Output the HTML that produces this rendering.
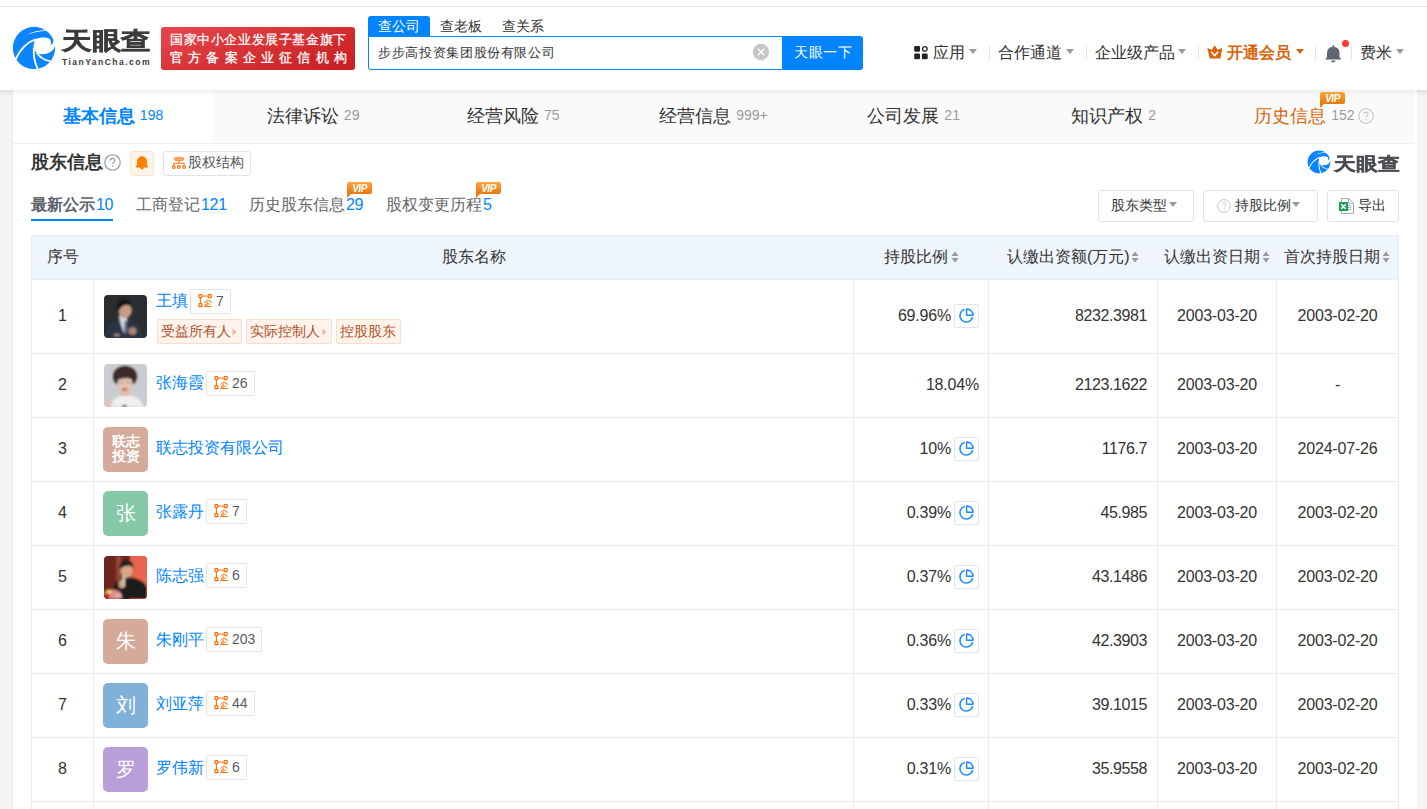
<!DOCTYPE html>
<html><head><meta charset="utf-8"><style>
*{box-sizing:border-box;margin:0;padding:0}
html,body{width:1427px;height:809px;overflow:hidden;background:#f5f5f5;font-family:"Liberation Sans",sans-serif;color:#333}
.t{position:absolute;white-space:nowrap}
.a{position:absolute}
.caret{position:absolute;width:0;height:0;border-left:4.5px solid transparent;border-right:4.5px solid transparent;border-top:5px solid #999}
.sep{position:absolute;width:1px;height:14px;background:#e3e3e3;top:46px}
.vip{position:absolute;width:25px;height:12px;background:linear-gradient(180deg,#f9a53c,#ea760f);border-radius:2px 2px 2px 0}
.vip:after{content:"";position:absolute;left:0;bottom:-4px;border-left:4px solid #ea760f;border-bottom:4px solid transparent}
.vip svg{position:absolute;left:0;top:0}
.btn{position:absolute;border:1px solid #dfe2e8;border-radius:3px;background:#fff}
.bd{position:absolute;height:25px;border:1px solid #e1e5eb;border-radius:2px;background:#fff}
.tg{position:absolute;height:25px;border:1px solid #fbdccb;background:#fff3ec;border-radius:2px}
.pie{position:absolute;width:25px;height:24px;border:1px solid #dfe4ec;border-radius:2px;background:#fff}
.hl{position:absolute;height:1px;background:#e4edf6}
.vl{position:absolute;width:1px;background:#e4edf6}
</style></head><body>
<div class="a" style="left:0;top:0;width:1427px;height:90px;background:#fff;box-shadow:0 2px 5px rgba(0,0,0,0.06)"></div>
<div class="a" style="left:0;top:6px;width:1427px;height:1px;background:#e6e6e6"></div>
<svg class="a" style="left:10px;top:24px" width="50" height="50" viewBox="0 0 809 809">
<circle cx="388" cy="388" r="342" fill="#0a84ff"/>
<path d="M268,172 C370,125 470,100 585,96 L590,110 C480,118 380,140 268,172 Z" fill="#fff"/>
<path d="M88,575 C160,420 280,290 425,245" fill="none" stroke="#fff" stroke-width="30"/>
<path d="M410,250 C480,215 580,208 640,243 C672,268 672,312 652,338 C685,332 705,300 705,255 L790,240 L790,372 L724,366 C702,442 622,490 522,490 C472,489 442,478 430,466 C400,440 384,410 382,380 C380,322 394,282 410,250 Z" fill="#fff"/>
<path d="M386,385 C376,500 398,620 452,740" fill="none" stroke="#fff" stroke-width="30"/>
<path d="M432,468 C488,540 560,586 650,602" fill="none" stroke="#fff" stroke-width="28"/>
</svg>
<div class="t" style="left:62px;top:23px;font-size:24px;line-height:36px;color:#3b3b3b;font-weight:bold;-webkit-text-stroke:0.5px #3b3b3b;transform:scaleX(1.23);transform-origin:0 0">天眼查</div>
<div class="t" style="left:62px;top:55px;font-size:8.6px;line-height:14px;color:#3b3b3b;font-weight:bold;letter-spacing:1.42px">TianYanCha.com</div>
<div class="a" style="left:161px;top:27px;width:194px;height:43px;border-radius:3px;background:linear-gradient(160deg,#e6474b,#c71d20)"></div>
<div class="t" style="left:170px;top:30px;font-size:13px;line-height:20px;color:#fff;letter-spacing:0.6px;-webkit-text-stroke:0.25px #fff">国家中小企业发展子基金旗下</div>
<div class="t" style="left:170px;top:48px;font-size:13px;line-height:20px;color:#fff;letter-spacing:5.2px;-webkit-text-stroke:0.3px #fff">官方备案企业征信机构</div>
<div class="a" style="left:368px;top:16px;width:62px;height:21px;background:#0084ff;border-radius:3px 3px 0 0"></div>
<div class="t" style="left:378px;top:17px;font-size:13.6px;line-height:20px;color:#fff;">查公司</div>
<div class="t" style="left:440px;top:17px;font-size:13.6px;line-height:20px;color:#333;">查老板</div>
<div class="t" style="left:502px;top:17px;font-size:13.6px;line-height:20px;color:#333;">查关系</div>
<div class="a" style="left:368px;top:36px;width:416px;height:34px;border:1px solid #0084ff;border-radius:0 0 0 3px;background:#fff"></div>
<div class="t" style="left:378px;top:43px;font-size:13px;line-height:20px;color:#333;letter-spacing:0.65px">步步高投资集团股份有限公司</div>
<svg class="a" style="left:752px;top:43px" width="18" height="18" viewBox="0 0 18 18"><circle cx="9" cy="9" r="8.2" fill="#c6c6c6"/><path d="M5.8,5.8 L12.2,12.2 M12.2,5.8 L5.8,12.2" stroke="#fff" stroke-width="1.3"/></svg>
<div class="a" style="left:782px;top:36px;width:81px;height:34px;background:#0084ff;border-radius:0 3px 3px 0"></div>
<div class="t" style="left:794px;top:42px;font-size:14px;line-height:20px;color:#fff;letter-spacing:0.7px">天眼一下</div>
<svg class="a" style="left:913px;top:45px" width="16" height="16" viewBox="0 0 16 16" fill="#1f2329"><rect x="1.2" y="1" width="5.8" height="5.8" rx="1.3"/><circle cx="11.8" cy="3.9" r="2.3" fill="none" stroke="#1f2329" stroke-width="1.3"/><rect x="1.2" y="8.4" width="5.8" height="5.8" rx="1.3"/><rect x="8.9" y="8.4" width="5.8" height="5.8" rx="1.3"/></svg>
<div class="t" style="left:933px;top:41px;font-size:16px;line-height:24px;color:#333;">应用</div>
<div class="caret" style="left:969px;top:49px"></div>
<div class="sep" style="left:989px"></div>
<div class="t" style="left:998px;top:41px;font-size:16px;line-height:24px;color:#333;">合作通道</div>
<div class="caret" style="left:1066px;top:49px"></div>
<div class="sep" style="left:1086px"></div>
<div class="t" style="left:1095px;top:41px;font-size:16px;line-height:24px;color:#333;">企业级产品</div>
<div class="caret" style="left:1178px;top:49px"></div>
<div class="sep" style="left:1198px"></div>
<svg class="a" style="left:1206px;top:44px" width="18" height="16" viewBox="0 0 18 16"><path d="M1.3,3.9 L5.9,5.8 L8.7,1.2 L11.6,5.8 L16.3,3.9 L14.4,14.6 L3.7,14.6 Z" fill="#d9650a"/><path d="M5.3,7.7 L8.7,11.5 L12.2,7.7" fill="none" stroke="#fff" stroke-width="1.6"/></svg>
<div class="t" style="left:1227px;top:41px;font-size:16px;line-height:24px;color:#d9650a;font-weight:bold">开通会员</div>
<div class="caret" style="left:1296px;top:49px;border-top-color:#d9650a"></div>
<div class="sep" style="left:1315px"></div>
<svg class="a" style="left:1324px;top:44px" width="20" height="20" viewBox="0 0 20 20" fill="#5f6670"><rect x="8.6" y="1" width="1.3" height="2.5"/><path d="M3,14.2 L3,9 C3,5 5.7,2.7 9.25,2.7 C12.8,2.7 15.5,5 15.5,9 L15.5,14.2 Z"/><rect x="1.6" y="13.8" width="15.2" height="1.6" rx="0.6"/><rect x="7.4" y="16.6" width="3.8" height="1.6" rx="0.6"/></svg>
<div class="a" style="left:1342px;top:40px;width:7px;height:7px;border-radius:50%;background:#ff3b30"></div>
<div class="sep" style="left:1351px"></div>
<div class="t" style="left:1360px;top:41px;font-size:16px;line-height:24px;color:#333;">费米</div>
<div class="caret" style="left:1396px;top:49px"></div>
<div class="a" style="left:13px;top:90px;width:1404px;height:719px;background:#fff"></div>
<div class="a" style="left:12px;top:90px;width:1px;height:719px;background:#ebebeb"></div>
<div class="a" style="left:13px;top:90px;width:1401px;height:54px;background:#fafafa;border-bottom:1px solid #eeeeee"></div>
<div class="a" style="left:13px;top:90px;width:200px;height:53px;background:#fff"></div>
<div class="a" style="left:0;top:90px;width:1427px;height:6px;background:linear-gradient(rgba(0,0,0,0.055),rgba(0,0,0,0))"></div>
<div class="t" style="left:13.0px;top:90px;width:200.1px;text-align:center;font-size:18px;line-height:53px;color:#0084ff;font-weight:bold">基本信息<span style="font-size:14px;font-weight:normal;margin-left:5px;position:relative;top:-2px">198</span></div>
<div class="t" style="left:213.1px;top:90px;width:200.1px;text-align:center;font-size:18px;line-height:53px;color:#333">法律诉讼<span style="font-size:14px;color:#999;margin-left:5px;position:relative;top:-2px">29</span></div>
<div class="t" style="left:413.3px;top:90px;width:200.1px;text-align:center;font-size:18px;line-height:53px;color:#333">经营风险<span style="font-size:14px;color:#999;margin-left:5px;position:relative;top:-2px">75</span></div>
<div class="t" style="left:613.4px;top:90px;width:200.1px;text-align:center;font-size:18px;line-height:53px;color:#333">经营信息<span style="font-size:14px;color:#999;margin-left:5px;position:relative;top:-2px">999+</span></div>
<div class="t" style="left:813.6px;top:90px;width:200.1px;text-align:center;font-size:18px;line-height:53px;color:#333">公司发展<span style="font-size:14px;color:#999;margin-left:5px;position:relative;top:-2px">21</span></div>
<div class="t" style="left:1013.7px;top:90px;width:200.1px;text-align:center;font-size:18px;line-height:53px;color:#333">知识产权<span style="font-size:14px;color:#999;margin-left:5px;position:relative;top:-2px">2</span></div>
<div class="t" style="left:1213.9px;top:90px;width:200.1px;text-align:center;font-size:18px;line-height:53px;color:#d9650a">历史信息<span style="font-size:14px;color:#999;margin-left:5px;position:relative;top:-2px">152</span><span style="display:inline-block;width:19px"></span></div>
<svg class="a" style="left:1358px;top:108px" width="16" height="16" viewBox="0 0 16 16"><circle cx="8" cy="8" r="7.3" fill="none" stroke="#c0c4cc" stroke-width="1.1"/><path d="M5.9,6.2 C5.9,4.9 6.8,4.1 8,4.1 C9.2,4.1 10.1,4.9 10.1,6 C10.1,7.3 8.2,7.5 8.2,9.3" fill="none" stroke="#c0c4cc" stroke-width="1.1"/><circle cx="8.2" cy="11.4" r="0.75" fill="#c0c4cc"/></svg>
<div class="vip" style="left:1320px;top:92px"><svg width="25" height="12" viewBox="0 0 25 12"><text x="12.5" y="10" text-anchor="middle" font-family="Liberation Sans" font-size="10" font-weight="bold" font-style="italic" fill="#fff" letter-spacing="-0.5">VIP</text></svg></div>
<div class="t" style="left:31px;top:149px;font-size:18px;line-height:26px;color:#333;font-weight:bold">股东信息</div>
<svg class="a" style="left:104px;top:154px" width="17" height="17" viewBox="0 0 16 16"><circle cx="8" cy="8" r="7.3" fill="none" stroke="#999" stroke-width="1.1"/><path d="M5.9,6.2 C5.9,4.9 6.8,4.1 8,4.1 C9.2,4.1 10.1,4.9 10.1,6 C10.1,7.3 8.2,7.5 8.2,9.3" fill="none" stroke="#999" stroke-width="1.1"/><circle cx="8.2" cy="11.4" r="0.75" fill="#999"/></svg>
<div class="a" style="left:130px;top:151px;width:24px;height:25px;background:#fff4ea;border:1px solid #ffe4cf;border-radius:3px"></div>
<svg class="a" style="left:135px;top:155px" width="14" height="15" viewBox="0 0 14 15" fill="#ff7f00"><path d="M2,11.5 L2,6.8 C2,3.4 4.2,1.2 7,1.2 C9.8,1.2 12,3.4 12,6.8 L12,11.5 Z"/><rect x="0.8" y="10.6" width="12.4" height="1.9" rx="0.9"/><circle cx="7" cy="12.7" r="1.7"/></svg>
<div class="btn" style="left:163px;top:151px;width:88px;height:25px;border-color:#dfe3ea"></div>
<svg class="a" style="left:171px;top:156px" width="16" height="14" viewBox="0 0 16 14"><rect x="3.3" y="1.4" width="9.4" height="3.2" rx="1.5" fill="#ffa466" stroke="#ff6a00" stroke-width="0.6"/><path d="M8,4.6 V7.2 M2.8,9.6 V7.2 H13.1 V9.6" fill="none" stroke="#ff6a00" stroke-width="1"/><rect x="1.6" y="9.9" width="2.4" height="2.4" rx="0.5" fill="none" stroke="#ff6a00" stroke-width="1.1"/><rect x="6.7" y="9.9" width="2.4" height="2.4" rx="0.5" fill="none" stroke="#ff6a00" stroke-width="1.1"/><rect x="11.9" y="9.9" width="2.4" height="2.4" rx="0.5" fill="none" stroke="#ff6a00" stroke-width="1.1"/></svg>
<div class="t" style="left:188px;top:152px;font-size:13.8px;line-height:22px;color:#555;">股权结构</div>
<svg class="a" style="left:1306px;top:149px" width="27" height="27" viewBox="0 0 809 809">
<circle cx="388" cy="388" r="342" fill="#0a84ff"/>
<path d="M268,172 C370,125 470,100 585,96 L590,110 C480,118 380,140 268,172 Z" fill="#fff"/>
<path d="M88,575 C160,420 280,290 425,245" fill="none" stroke="#fff" stroke-width="30"/>
<path d="M410,250 C480,215 580,208 640,243 C672,268 672,312 652,338 C685,332 705,300 705,255 L790,240 L790,372 L724,366 C702,442 622,490 522,490 C472,489 442,478 430,466 C400,440 384,410 382,380 C380,322 394,282 410,250 Z" fill="#fff"/>
<path d="M386,385 C376,500 398,620 452,740" fill="none" stroke="#fff" stroke-width="30"/>
<path d="M432,468 C488,540 560,586 650,602" fill="none" stroke="#fff" stroke-width="28"/>
</svg>
<div class="t" style="left:1334px;top:150px;font-size:18px;line-height:28px;color:#4a4d52;font-weight:bold;-webkit-text-stroke:0.3px #4a4d52;transform:scaleX(1.22);transform-origin:0 0">天眼查</div>
<div class="t" style="left:31px;top:192px;font-size:16px;line-height:26px;color:#5a626c;font-weight:bold">最新公示<span style="color:#0084ff;font-weight:normal;margin-left:1px;font-size:16px;letter-spacing:-0.3px">10</span></div>
<div class="a" style="left:31px;top:219px;width:82px;height:2px;background:#0084ff"></div>
<div class="t" style="left:136px;top:192px;font-size:16px;line-height:26px;color:#666;">工商登记<span style="color:#0084ff;margin-left:1px;font-size:16px;letter-spacing:-0.3px">121</span></div>
<div class="t" style="left:249px;top:192px;font-size:16px;line-height:26px;color:#666;">历史股东信息<span style="color:#0084ff;margin-left:1px;font-size:16px;letter-spacing:-0.3px">29</span></div>
<div class="vip" style="left:347px;top:182px"><svg width="25" height="12" viewBox="0 0 25 12"><text x="12.5" y="10" text-anchor="middle" font-family="Liberation Sans" font-size="10" font-weight="bold" font-style="italic" fill="#fff" letter-spacing="-0.5">VIP</text></svg></div>
<div class="t" style="left:386px;top:192px;font-size:16px;line-height:26px;color:#666;">股权变更历程<span style="color:#0084ff;margin-left:1px;font-size:16px;letter-spacing:-0.3px">5</span></div>
<div class="vip" style="left:476px;top:182px"><svg width="25" height="12" viewBox="0 0 25 12"><text x="12.5" y="10" text-anchor="middle" font-family="Liberation Sans" font-size="10" font-weight="bold" font-style="italic" fill="#fff" letter-spacing="-0.5">VIP</text></svg></div>
<div class="btn" style="left:1098px;top:190px;width:96px;height:32px"></div>
<div class="t" style="left:1111px;top:194px;font-size:13.8px;line-height:24px;color:#333;">股东类型</div>
<div class="caret" style="left:1169px;top:202px;border-left-width:4px;border-right-width:4px;border-top-width:5px"></div>
<div class="btn" style="left:1203px;top:190px;width:115px;height:32px"></div>
<svg class="a" style="left:1217px;top:199px" width="14" height="14" viewBox="0 0 16 16"><circle cx="8" cy="8" r="7.3" fill="none" stroke="#c0c4cc" stroke-width="1.1"/><path d="M5.9,6.2 C5.9,4.9 6.8,4.1 8,4.1 C9.2,4.1 10.1,4.9 10.1,6 C10.1,7.3 8.2,7.5 8.2,9.3" fill="none" stroke="#c0c4cc" stroke-width="1.1"/><circle cx="8.2" cy="11.4" r="0.75" fill="#c0c4cc"/></svg>
<div class="t" style="left:1235px;top:194px;font-size:13.8px;line-height:24px;color:#333;">持股比例</div>
<div class="caret" style="left:1292px;top:202px;border-left-width:4px;border-right-width:4px;border-top-width:5px"></div>
<div class="btn" style="left:1327px;top:190px;width:72px;height:32px"></div>
<svg class="a" style="left:1338px;top:197px" width="18" height="18" viewBox="0 0 18 18"><path d="M3.5,1.5 H10.5 L15.5,6.2 V16.5 H3.5 Z" fill="#fff" stroke="#9aa1ab" stroke-width="0.9"/><path d="M10.5,1.5 V6.2 H15.5" fill="none" stroke="#9aa1ab" stroke-width="0.9"/><path d="M10,8.6 H13.3 M10,10.6 H13.3 M10,12.6 H13.3" stroke="#9aa1ab" stroke-width="0.9"/><rect x="1" y="5" width="9" height="9" fill="#1aa155"/><path d="M3.3,7.2 L7.7,11.8 M7.7,7.2 L3.3,11.8" stroke="#fff" stroke-width="1.5"/></svg>
<div class="t" style="left:1358px;top:194px;font-size:13.8px;line-height:24px;color:#333;">导出</div>
<div class="a" style="left:31px;top:235px;width:1368px;height:44px;background:#eef5fc"></div>
<div class="hl" style="left:31px;top:235px;width:1368px"></div>
<div class="hl" style="left:31px;top:279px;width:1368px"></div>
<div class="hl" style="left:31px;top:353px;width:1368px"></div>
<div class="hl" style="left:31px;top:417px;width:1368px"></div>
<div class="hl" style="left:31px;top:481px;width:1368px"></div>
<div class="hl" style="left:31px;top:545px;width:1368px"></div>
<div class="hl" style="left:31px;top:609px;width:1368px"></div>
<div class="hl" style="left:31px;top:673px;width:1368px"></div>
<div class="hl" style="left:31px;top:737px;width:1368px"></div>
<div class="hl" style="left:31px;top:801px;width:1368px"></div>
<div class="vl" style="left:31px;top:235px;height:574px"></div>
<div class="vl" style="left:93px;top:279px;height:530px"></div>
<div class="vl" style="left:853px;top:279px;height:530px"></div>
<div class="vl" style="left:988px;top:279px;height:530px"></div>
<div class="vl" style="left:1157px;top:279px;height:530px"></div>
<div class="vl" style="left:1276px;top:279px;height:530px"></div>
<div class="vl" style="left:1398px;top:235px;height:574px"></div>
<div class="t" style="left:-37.5px;top:245px;width:200px;text-align:center;font-size:16px;line-height:24px;color:#333;">序号</div>
<div class="t" style="left:373.5px;top:245px;width:200px;text-align:center;font-size:16px;line-height:24px;color:#333;">股东名称</div>
<div class="t" style="left:884px;top:245px;font-size:16px;line-height:24px;color:#333;">持股比例</div>
<svg class="a" style="left:951px;top:250px" width="8" height="14" viewBox="0 0 8 14" fill="#999"><path d="M0.5,6 L4,1.5 L7.5,6 Z M0.5,8 L4,12.5 L7.5,8 Z"/></svg>
<div class="t" style="left:1007px;top:245px;font-size:16px;line-height:24px;color:#333;">认缴出资额(万元)</div>
<svg class="a" style="left:1131px;top:250px" width="8" height="14" viewBox="0 0 8 14" fill="#999"><path d="M0.5,6 L4,1.5 L7.5,6 Z M0.5,8 L4,12.5 L7.5,8 Z"/></svg>
<div class="t" style="left:1164px;top:245px;font-size:16px;line-height:24px;color:#333;">认缴出资日期</div>
<svg class="a" style="left:1262px;top:250px" width="8" height="14" viewBox="0 0 8 14" fill="#999"><path d="M0.5,6 L4,1.5 L7.5,6 Z M0.5,8 L4,12.5 L7.5,8 Z"/></svg>
<div class="t" style="left:1284px;top:245px;font-size:16px;line-height:24px;color:#333;">首次持股日期</div>
<svg class="a" style="left:1382px;top:250px" width="8" height="14" viewBox="0 0 8 14" fill="#999"><path d="M0.5,6 L4,1.5 L7.5,6 Z M0.5,8 L4,12.5 L7.5,8 Z"/></svg>
<div class="t" style="left:-37.5px;top:303.5px;width:200px;text-align:center;font-size:16px;line-height:24px;color:#333;">1</div>
<div class="t" style="left:751px;top:303.5px;width:200px;text-align:right;font-size:16px;line-height:24px;color:#333;letter-spacing:-0.2px">69.96%</div>
<div class="pie" style="left:954px;top:304.0px"><svg class="a" style="left:-1px;top:-1px" width="24" height="24" viewBox="0 0 24 24"><path d="M10.2,5.6 A6.4,6.4 0 1 0 18.4,13.7" fill="none" stroke="#1a8cff" stroke-width="1.5" stroke-linecap="round"/><path d="M12.6,11.3 V4.9 A6.4,6.4 0 0 1 19.0,11.3 Z" fill="none" stroke="#1a8cff" stroke-width="1.5" stroke-linejoin="round"/></svg></div>
<div class="t" style="left:947px;top:303.5px;width:200px;text-align:right;font-size:16px;line-height:24px;color:#333;letter-spacing:-0.4px">8232.3981</div>
<div class="t" style="left:1117.0px;top:303.5px;width:200px;text-align:center;font-size:16px;line-height:24px;color:#333;letter-spacing:-0.2px">2003-03-20</div>
<div class="t" style="left:1237.5px;top:303.5px;width:200px;text-align:center;font-size:16px;line-height:24px;color:#333;letter-spacing:-0.2px">2003-02-20</div>
<div class="t" style="left:-37.5px;top:372.5px;width:200px;text-align:center;font-size:16px;line-height:24px;color:#333;">2</div>
<div class="t" style="left:779px;top:372.5px;width:200px;text-align:right;font-size:16px;line-height:24px;color:#333;letter-spacing:-0.2px">18.04%</div>
<div class="t" style="left:947px;top:372.5px;width:200px;text-align:right;font-size:16px;line-height:24px;color:#333;letter-spacing:-0.4px">2123.1622</div>
<div class="t" style="left:1117.0px;top:372.5px;width:200px;text-align:center;font-size:16px;line-height:24px;color:#333;letter-spacing:-0.2px">2003-03-20</div>
<div class="t" style="left:1237.5px;top:372.5px;width:200px;text-align:center;font-size:16px;line-height:24px;color:#333;letter-spacing:-0.2px">-</div>
<div class="t" style="left:-37.5px;top:436.5px;width:200px;text-align:center;font-size:16px;line-height:24px;color:#333;">3</div>
<div class="t" style="left:751px;top:436.5px;width:200px;text-align:right;font-size:16px;line-height:24px;color:#333;letter-spacing:-0.2px">10%</div>
<div class="pie" style="left:954px;top:437.0px"><svg class="a" style="left:-1px;top:-1px" width="24" height="24" viewBox="0 0 24 24"><path d="M10.2,5.6 A6.4,6.4 0 1 0 18.4,13.7" fill="none" stroke="#1a8cff" stroke-width="1.5" stroke-linecap="round"/><path d="M12.6,11.3 V4.9 A6.4,6.4 0 0 1 19.0,11.3 Z" fill="none" stroke="#1a8cff" stroke-width="1.5" stroke-linejoin="round"/></svg></div>
<div class="t" style="left:947px;top:436.5px;width:200px;text-align:right;font-size:16px;line-height:24px;color:#333;letter-spacing:-0.4px">1176.7</div>
<div class="t" style="left:1117.0px;top:436.5px;width:200px;text-align:center;font-size:16px;line-height:24px;color:#333;letter-spacing:-0.2px">2003-03-20</div>
<div class="t" style="left:1237.5px;top:436.5px;width:200px;text-align:center;font-size:16px;line-height:24px;color:#333;letter-spacing:-0.2px">2024-07-26</div>
<div class="t" style="left:-37.5px;top:500.5px;width:200px;text-align:center;font-size:16px;line-height:24px;color:#333;">4</div>
<div class="t" style="left:751px;top:500.5px;width:200px;text-align:right;font-size:16px;line-height:24px;color:#333;letter-spacing:-0.2px">0.39%</div>
<div class="pie" style="left:954px;top:501.0px"><svg class="a" style="left:-1px;top:-1px" width="24" height="24" viewBox="0 0 24 24"><path d="M10.2,5.6 A6.4,6.4 0 1 0 18.4,13.7" fill="none" stroke="#1a8cff" stroke-width="1.5" stroke-linecap="round"/><path d="M12.6,11.3 V4.9 A6.4,6.4 0 0 1 19.0,11.3 Z" fill="none" stroke="#1a8cff" stroke-width="1.5" stroke-linejoin="round"/></svg></div>
<div class="t" style="left:947px;top:500.5px;width:200px;text-align:right;font-size:16px;line-height:24px;color:#333;letter-spacing:-0.4px">45.985</div>
<div class="t" style="left:1117.0px;top:500.5px;width:200px;text-align:center;font-size:16px;line-height:24px;color:#333;letter-spacing:-0.2px">2003-03-20</div>
<div class="t" style="left:1237.5px;top:500.5px;width:200px;text-align:center;font-size:16px;line-height:24px;color:#333;letter-spacing:-0.2px">2003-02-20</div>
<div class="t" style="left:-37.5px;top:564.5px;width:200px;text-align:center;font-size:16px;line-height:24px;color:#333;">5</div>
<div class="t" style="left:751px;top:564.5px;width:200px;text-align:right;font-size:16px;line-height:24px;color:#333;letter-spacing:-0.2px">0.37%</div>
<div class="pie" style="left:954px;top:565.0px"><svg class="a" style="left:-1px;top:-1px" width="24" height="24" viewBox="0 0 24 24"><path d="M10.2,5.6 A6.4,6.4 0 1 0 18.4,13.7" fill="none" stroke="#1a8cff" stroke-width="1.5" stroke-linecap="round"/><path d="M12.6,11.3 V4.9 A6.4,6.4 0 0 1 19.0,11.3 Z" fill="none" stroke="#1a8cff" stroke-width="1.5" stroke-linejoin="round"/></svg></div>
<div class="t" style="left:947px;top:564.5px;width:200px;text-align:right;font-size:16px;line-height:24px;color:#333;letter-spacing:-0.4px">43.1486</div>
<div class="t" style="left:1117.0px;top:564.5px;width:200px;text-align:center;font-size:16px;line-height:24px;color:#333;letter-spacing:-0.2px">2003-03-20</div>
<div class="t" style="left:1237.5px;top:564.5px;width:200px;text-align:center;font-size:16px;line-height:24px;color:#333;letter-spacing:-0.2px">2003-02-20</div>
<div class="t" style="left:-37.5px;top:628.5px;width:200px;text-align:center;font-size:16px;line-height:24px;color:#333;">6</div>
<div class="t" style="left:751px;top:628.5px;width:200px;text-align:right;font-size:16px;line-height:24px;color:#333;letter-spacing:-0.2px">0.36%</div>
<div class="pie" style="left:954px;top:629.0px"><svg class="a" style="left:-1px;top:-1px" width="24" height="24" viewBox="0 0 24 24"><path d="M10.2,5.6 A6.4,6.4 0 1 0 18.4,13.7" fill="none" stroke="#1a8cff" stroke-width="1.5" stroke-linecap="round"/><path d="M12.6,11.3 V4.9 A6.4,6.4 0 0 1 19.0,11.3 Z" fill="none" stroke="#1a8cff" stroke-width="1.5" stroke-linejoin="round"/></svg></div>
<div class="t" style="left:947px;top:628.5px;width:200px;text-align:right;font-size:16px;line-height:24px;color:#333;letter-spacing:-0.4px">42.3903</div>
<div class="t" style="left:1117.0px;top:628.5px;width:200px;text-align:center;font-size:16px;line-height:24px;color:#333;letter-spacing:-0.2px">2003-03-20</div>
<div class="t" style="left:1237.5px;top:628.5px;width:200px;text-align:center;font-size:16px;line-height:24px;color:#333;letter-spacing:-0.2px">2003-02-20</div>
<div class="t" style="left:-37.5px;top:692.5px;width:200px;text-align:center;font-size:16px;line-height:24px;color:#333;">7</div>
<div class="t" style="left:751px;top:692.5px;width:200px;text-align:right;font-size:16px;line-height:24px;color:#333;letter-spacing:-0.2px">0.33%</div>
<div class="pie" style="left:954px;top:693.0px"><svg class="a" style="left:-1px;top:-1px" width="24" height="24" viewBox="0 0 24 24"><path d="M10.2,5.6 A6.4,6.4 0 1 0 18.4,13.7" fill="none" stroke="#1a8cff" stroke-width="1.5" stroke-linecap="round"/><path d="M12.6,11.3 V4.9 A6.4,6.4 0 0 1 19.0,11.3 Z" fill="none" stroke="#1a8cff" stroke-width="1.5" stroke-linejoin="round"/></svg></div>
<div class="t" style="left:947px;top:692.5px;width:200px;text-align:right;font-size:16px;line-height:24px;color:#333;letter-spacing:-0.4px">39.1015</div>
<div class="t" style="left:1117.0px;top:692.5px;width:200px;text-align:center;font-size:16px;line-height:24px;color:#333;letter-spacing:-0.2px">2003-03-20</div>
<div class="t" style="left:1237.5px;top:692.5px;width:200px;text-align:center;font-size:16px;line-height:24px;color:#333;letter-spacing:-0.2px">2003-02-20</div>
<div class="t" style="left:-37.5px;top:756.5px;width:200px;text-align:center;font-size:16px;line-height:24px;color:#333;">8</div>
<div class="t" style="left:751px;top:756.5px;width:200px;text-align:right;font-size:16px;line-height:24px;color:#333;letter-spacing:-0.2px">0.31%</div>
<div class="pie" style="left:954px;top:757.0px"><svg class="a" style="left:-1px;top:-1px" width="24" height="24" viewBox="0 0 24 24"><path d="M10.2,5.6 A6.4,6.4 0 1 0 18.4,13.7" fill="none" stroke="#1a8cff" stroke-width="1.5" stroke-linecap="round"/><path d="M12.6,11.3 V4.9 A6.4,6.4 0 0 1 19.0,11.3 Z" fill="none" stroke="#1a8cff" stroke-width="1.5" stroke-linejoin="round"/></svg></div>
<div class="t" style="left:947px;top:756.5px;width:200px;text-align:right;font-size:16px;line-height:24px;color:#333;letter-spacing:-0.4px">35.9558</div>
<div class="t" style="left:1117.0px;top:756.5px;width:200px;text-align:center;font-size:16px;line-height:24px;color:#333;letter-spacing:-0.2px">2003-03-20</div>
<div class="t" style="left:1237.5px;top:756.5px;width:200px;text-align:center;font-size:16px;line-height:24px;color:#333;letter-spacing:-0.2px">2003-02-20</div>
<div class="a" style="left:104px;top:295px;width:43px;height:43px;border-radius:4px;overflow:hidden"><svg width="43" height="43" viewBox="0 0 43 43"><defs><filter id="bl1"><feGaussianBlur stdDeviation="0.9"/></filter></defs><rect width="43" height="43" fill="#2b2e30"/><g filter="url(#bl1)">
<path d="M2,43 C2,33 6,27 14,25.5 L25,25.5 C33,27 38,32 39,43 Z" fill="#2a3447"/>
<path d="M14.5,21 L19.5,38 L24,21 Z" fill="#d5dbe0"/><path d="M20.3,26 L22.6,26 L23,37 L21.4,39.5 L19.8,37 Z" fill="#6b7687"/>
<ellipse cx="21" cy="15.5" rx="6.8" ry="7.8" fill="#c69c82"/><path d="M13.5,15 C12,7 16,4.3 20,4.3 C25,4.3 27,7 26,11 C22,9 17,10 14.5,17 Z" fill="#141516"/>
<ellipse cx="28.5" cy="36" rx="4" ry="3.8" fill="#a98670"/><ellipse cx="13" cy="40" rx="3" ry="1.6" fill="#a98670"/>
</g></svg></div>
<div class="t" style="left:156px;top:289px;font-size:16px;line-height:24px;color:#0084ff;">王填</div>
<div class="bd" style="left:190px;top:289px;width:41px"><svg class="a" style="left:-1px;top:-1px" width="25" height="25" viewBox="0 0 25 25"><g fill="none" stroke="#ff6a00"><rect x="8.9" y="5.6" width="3" height="3" rx="0.7" stroke-width="1.25"/><rect x="18.2" y="5.6" width="3" height="3" rx="0.7" stroke-width="1.25"/><rect x="8.9" y="14.6" width="3" height="3" rx="0.7" stroke-width="1.25"/><path d="M12.4,7.1 H17.7 M10.4,8.9 V14.1" stroke-width="1"/><path d="M14.3,13.5 L18.1,11.1 L22.2,13.6 M17.1,12.8 V17.3 M15.4,14.6 V17.3 M17.1,15 H20.2 M14.4,17.5 H21.8" stroke-width="0.95"/></g></svg><span class="t" style="left:25px;top:0;font-size:14px;line-height:23px;color:#555b66">7</span></div>
<div class="tg" style="left:157px;top:319px;width:85px"><span class="t" style="left:3px;top:0;font-size:13.8px;line-height:23px;color:#b0502a">受益所有人</span><svg class="a" style="right:4px;top:8px" width="5" height="8" viewBox="0 0 5 8"><path d="M0.5,0.5 L4.5,4 L0.5,7.5 Z" fill="#e6b7a3"/></svg></div>
<div class="tg" style="left:246px;top:319px;width:86px"><span class="t" style="left:3px;top:0;font-size:13.8px;line-height:23px;color:#b0502a">实际控制人</span><svg class="a" style="right:4px;top:8px" width="5" height="8" viewBox="0 0 5 8"><path d="M0.5,0.5 L4.5,4 L0.5,7.5 Z" fill="#e6b7a3"/></svg></div>
<div class="tg" style="left:336px;top:319px;width:65px"><span class="t" style="left:3px;top:0;font-size:13.8px;line-height:23px;color:#b0502a">控股股东</span></div>
<div class="a" style="left:104px;top:364px;width:43px;height:43px;border-radius:4px;overflow:hidden"><svg width="43" height="43" viewBox="0 0 43 43"><defs><filter id="bl2"><feGaussianBlur stdDeviation="0.8"/></filter></defs><rect width="43" height="43" fill="#c9cdd1"/><g filter="url(#bl2)">
<path d="M0,43 C1,37 4,35 9,34.5 L11,43 Z" fill="#e2c5b2"/>
<path d="M7,43 C8,35 13,31.5 21,31 C29,31 37,34 40,43 Z" fill="#efefef"/><rect x="17" y="25" width="8" height="7" fill="#dcbaa6"/>
<ellipse cx="21" cy="12.5" rx="12" ry="10.5" fill="#3b2b2a"/>
<ellipse cx="21" cy="20" rx="7.6" ry="9.6" fill="#e0c3b1"/><path d="M13,16 C14,11 18,9.5 22,10 C26,10.5 29,12 29.5,16 C26,13.5 19,13.5 13,16 Z" fill="#3b2b2a"/>
<rect x="17.8" y="24.6" width="5.5" height="1.8" rx="0.8" fill="#b8404a"/><ellipse cx="17.8" cy="18.5" rx="1.2" ry="0.6" fill="#5a4038"/><ellipse cx="24.2" cy="18.5" rx="1.2" ry="0.6" fill="#5a4038"/>
<path d="M17,43 L20.5,40.5 L24,43 Z" fill="#222"/>
</g></svg></div>
<div class="t" style="left:156px;top:371px;font-size:16px;line-height:24px;color:#0084ff;">张海霞</div>
<div class="bd" style="left:206px;top:371px;width:49px"><svg class="a" style="left:-1px;top:-1px" width="25" height="25" viewBox="0 0 25 25"><g fill="none" stroke="#ff6a00"><rect x="8.9" y="5.6" width="3" height="3" rx="0.7" stroke-width="1.25"/><rect x="18.2" y="5.6" width="3" height="3" rx="0.7" stroke-width="1.25"/><rect x="8.9" y="14.6" width="3" height="3" rx="0.7" stroke-width="1.25"/><path d="M12.4,7.1 H17.7 M10.4,8.9 V14.1" stroke-width="1"/><path d="M14.3,13.5 L18.1,11.1 L22.2,13.6 M17.1,12.8 V17.3 M15.4,14.6 V17.3 M17.1,15 H20.2 M14.4,17.5 H21.8" stroke-width="0.95"/></g></svg><span class="t" style="left:25px;top:0;font-size:14px;line-height:23px;color:#555b66">26</span></div>
<div class="t" style="left:103px;top:427px;width:45px;height:45px;border-radius:5px;background:#d4ab9b;color:#fff;text-align:center;font-size:20px;line-height:45px"><div style="line-height:15px;padding-top:7px;font-size:14px;font-weight:bold">联志<br>投资</div></div>
<div class="t" style="left:156px;top:436px;font-size:16px;line-height:24px;color:#0084ff;">联志投资有限公司</div>
<div class="t" style="left:103px;top:491px;width:45px;height:45px;border-radius:5px;background:#84c8a8;color:#fff;text-align:center;font-size:20px;line-height:45px">张</div>
<div class="t" style="left:156px;top:500px;font-size:16px;line-height:24px;color:#0084ff;">张露丹</div>
<div class="bd" style="left:206px;top:499px;width:41px"><svg class="a" style="left:-1px;top:-1px" width="25" height="25" viewBox="0 0 25 25"><g fill="none" stroke="#ff6a00"><rect x="8.9" y="5.6" width="3" height="3" rx="0.7" stroke-width="1.25"/><rect x="18.2" y="5.6" width="3" height="3" rx="0.7" stroke-width="1.25"/><rect x="8.9" y="14.6" width="3" height="3" rx="0.7" stroke-width="1.25"/><path d="M12.4,7.1 H17.7 M10.4,8.9 V14.1" stroke-width="1"/><path d="M14.3,13.5 L18.1,11.1 L22.2,13.6 M17.1,12.8 V17.3 M15.4,14.6 V17.3 M17.1,15 H20.2 M14.4,17.5 H21.8" stroke-width="0.95"/></g></svg><span class="t" style="left:25px;top:0;font-size:14px;line-height:23px;color:#555b66">7</span></div>
<div class="a" style="left:104px;top:556px;width:43px;height:43px;border-radius:4px;overflow:hidden"><svg width="43" height="43" viewBox="0 0 43 43"><defs><filter id="bl5"><feGaussianBlur stdDeviation="0.9"/></filter></defs><rect width="43" height="43" fill="#6e261c"/><g filter="url(#bl5)"><rect x="26" y="-2" width="19" height="47" fill="#e9654f"/><rect x="12.5" y="0" width="4.5" height="32" fill="#9c4a38"/>
<path d="M8,43 C8,30 12,23 21,21 C33,21 41,25 43,32 L43,43 Z" fill="#1d1a1d"/>
<ellipse cx="22.5" cy="14.5" rx="5.8" ry="7.5" fill="#d8a68a"/><path d="M15.5,12 C15,6 19,4.5 22.5,4.5 C27,4.5 30,7 29.5,11.5 C26.5,9 20,9 16,13.5 Z" fill="#241c1a"/>
<ellipse cx="17.5" cy="28" rx="3" ry="4.2" fill="#d09a80"/><rect x="18.2" y="19" width="2.8" height="12" rx="1.2" fill="#d2c9a8"/>
<ellipse cx="8" cy="38.5" rx="9" ry="5" fill="#d9868a"/><ellipse cx="5" cy="36" rx="3" ry="2.4" fill="#e8d060"/><ellipse cx="14" cy="40" rx="4" ry="3" fill="#e8a4a0"/><ellipse cx="2.5" cy="40" rx="3" ry="3" fill="#b8202a"/>
</g></svg></div>
<div class="t" style="left:156px;top:564px;font-size:16px;line-height:24px;color:#0084ff;">陈志强</div>
<div class="bd" style="left:206px;top:563px;width:41px"><svg class="a" style="left:-1px;top:-1px" width="25" height="25" viewBox="0 0 25 25"><g fill="none" stroke="#ff6a00"><rect x="8.9" y="5.6" width="3" height="3" rx="0.7" stroke-width="1.25"/><rect x="18.2" y="5.6" width="3" height="3" rx="0.7" stroke-width="1.25"/><rect x="8.9" y="14.6" width="3" height="3" rx="0.7" stroke-width="1.25"/><path d="M12.4,7.1 H17.7 M10.4,8.9 V14.1" stroke-width="1"/><path d="M14.3,13.5 L18.1,11.1 L22.2,13.6 M17.1,12.8 V17.3 M15.4,14.6 V17.3 M17.1,15 H20.2 M14.4,17.5 H21.8" stroke-width="0.95"/></g></svg><span class="t" style="left:25px;top:0;font-size:14px;line-height:23px;color:#555b66">6</span></div>
<div class="t" style="left:103px;top:619px;width:45px;height:45px;border-radius:5px;background:#d4ab9b;color:#fff;text-align:center;font-size:20px;line-height:45px">朱</div>
<div class="t" style="left:156px;top:628px;font-size:16px;line-height:24px;color:#0084ff;">朱刚平</div>
<div class="bd" style="left:206px;top:627px;width:56px"><svg class="a" style="left:-1px;top:-1px" width="25" height="25" viewBox="0 0 25 25"><g fill="none" stroke="#ff6a00"><rect x="8.9" y="5.6" width="3" height="3" rx="0.7" stroke-width="1.25"/><rect x="18.2" y="5.6" width="3" height="3" rx="0.7" stroke-width="1.25"/><rect x="8.9" y="14.6" width="3" height="3" rx="0.7" stroke-width="1.25"/><path d="M12.4,7.1 H17.7 M10.4,8.9 V14.1" stroke-width="1"/><path d="M14.3,13.5 L18.1,11.1 L22.2,13.6 M17.1,12.8 V17.3 M15.4,14.6 V17.3 M17.1,15 H20.2 M14.4,17.5 H21.8" stroke-width="0.95"/></g></svg><span class="t" style="left:25px;top:0;font-size:14px;line-height:23px;color:#555b66">203</span></div>
<div class="t" style="left:103px;top:683px;width:45px;height:45px;border-radius:5px;background:#7fb1d9;color:#fff;text-align:center;font-size:20px;line-height:45px">刘</div>
<div class="t" style="left:156px;top:692px;font-size:16px;line-height:24px;color:#0084ff;">刘亚萍</div>
<div class="bd" style="left:206px;top:691px;width:49px"><svg class="a" style="left:-1px;top:-1px" width="25" height="25" viewBox="0 0 25 25"><g fill="none" stroke="#ff6a00"><rect x="8.9" y="5.6" width="3" height="3" rx="0.7" stroke-width="1.25"/><rect x="18.2" y="5.6" width="3" height="3" rx="0.7" stroke-width="1.25"/><rect x="8.9" y="14.6" width="3" height="3" rx="0.7" stroke-width="1.25"/><path d="M12.4,7.1 H17.7 M10.4,8.9 V14.1" stroke-width="1"/><path d="M14.3,13.5 L18.1,11.1 L22.2,13.6 M17.1,12.8 V17.3 M15.4,14.6 V17.3 M17.1,15 H20.2 M14.4,17.5 H21.8" stroke-width="0.95"/></g></svg><span class="t" style="left:25px;top:0;font-size:14px;line-height:23px;color:#555b66">44</span></div>
<div class="t" style="left:103px;top:747px;width:45px;height:45px;border-radius:5px;background:#b99fda;color:#fff;text-align:center;font-size:20px;line-height:45px">罗</div>
<div class="t" style="left:156px;top:756px;font-size:16px;line-height:24px;color:#0084ff;">罗伟新</div>
<div class="bd" style="left:206px;top:755px;width:41px"><svg class="a" style="left:-1px;top:-1px" width="25" height="25" viewBox="0 0 25 25"><g fill="none" stroke="#ff6a00"><rect x="8.9" y="5.6" width="3" height="3" rx="0.7" stroke-width="1.25"/><rect x="18.2" y="5.6" width="3" height="3" rx="0.7" stroke-width="1.25"/><rect x="8.9" y="14.6" width="3" height="3" rx="0.7" stroke-width="1.25"/><path d="M12.4,7.1 H17.7 M10.4,8.9 V14.1" stroke-width="1"/><path d="M14.3,13.5 L18.1,11.1 L22.2,13.6 M17.1,12.8 V17.3 M15.4,14.6 V17.3 M17.1,15 H20.2 M14.4,17.5 H21.8" stroke-width="0.95"/></g></svg><span class="t" style="left:25px;top:0;font-size:14px;line-height:23px;color:#555b66">6</span></div>
</body></html>
